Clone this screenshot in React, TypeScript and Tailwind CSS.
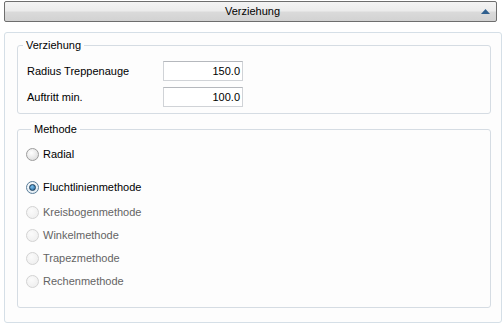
import React from 'react';

type RadioProps = { label: string; checked?: boolean; disabled?: boolean };

const Radio: React.FC<RadioProps> = ({ label, checked, disabled }) => {
    return (
        <div className="flex items-center h-[15px]">
            <span
                className={`flex items-center justify-center w-[13px] h-[13px] rounded-full border ${disabled
                    ? 'border-[#d3d3d3] bg-[radial-gradient(circle_at_40%_35%,#fbfbfb,#ececec)]'
                    : checked
                        ? 'border-[#5a7d99] bg-[radial-gradient(circle_at_40%_35%,#ffffff,#d8e6ef)]'
                        : 'border-[#9c9c9c] bg-[radial-gradient(circle_at_40%_35%,#ffffff,#d6d6d6)]'
                    }`}
            >
                {checked && (
                    <span className="w-[7px] h-[7px] rounded-full border border-[#193d5c] bg-[radial-gradient(circle_at_40%_35%,#7ec3f0,#1c5d92)]" />
                )}
            </span>
            <span className={`ml-[4px] leading-[13px] ${disabled ? 'text-[#646464]' : 'text-black'}`}>{label}</span>
        </div>
    );
};

const Field: React.FC<{ label: string; value: string }> = ({ label, value }) => (
    <div className="flex items-center h-[20px]">
        <span className="w-[145px] pl-[9px] text-black">{label}</span>
        <div className="w-[80px] h-[20px] border border-[#d0d3d7] border-t-[#b5b8bd] bg-white flex items-center justify-end pr-[2px] text-black">
            {value}
        </div>
    </div>
);

const App: React.FC = () => {
    return (
        <div className="w-[504px] h-[327px] bg-white pt-[1px] pl-[4px] text-[11px] font-['Liberation_Sans',Arial,sans-serif] overflow-hidden">
            {/* Section header */}
            <div className="w-[493px] h-[21px] rounded-[2px] border border-[#6e6e6e] bg-[linear-gradient(to_bottom,#f4f4f4_0%,#ececec_45%,#dadada_55%,#d2d2d2_100%)] flex items-center relative">
                <span className="flex-1 text-center text-[11px] text-black pl-[4px]">Verziehung</span>
                <svg width="9" height="5" viewBox="0 0 9 5" className="absolute right-[6px] top-[7px]">
                    <polygon points="0,5 9,5 4.5,0" fill="#2f5f8e" />
                </svg>
            </div>

            {/* Panel */}
            <div className="mt-[10px] w-[498px] h-[291px] rounded-[3px] border border-[#d5dfe7] bg-[#fdfdfd] px-[12px] pt-[6px]">
                <fieldset className="w-[474px] h-[75px] rounded-[3px] border border-[#d5dce3] pt-[9px]">
                    <legend className="ml-[5px] px-[3px] leading-[13px] text-black">Verziehung</legend>
                    <div className="flex flex-col gap-[6px]">
                        <Field label="Radius Treppenauge" value="150.0" />
                        <Field label="Auftritt min." value="100.0" />
                    </div>
                </fieldset>

                <fieldset className="mt-[9px] w-[474px] h-[185px] rounded-[3px] border border-[#d5dce3] pl-[8px] pt-[11px]">
                    <legend className="ml-[5px] px-[3px] leading-[13px] text-black">Methode</legend>
                    <div className="flex flex-col">
                        <Radio label="Radial" />
                        <div className="mt-[18px] flex flex-col">
                            <Radio label="Fluchtlinienmethode" checked />
                            <div className="mt-[10px] flex flex-col gap-[8px]">
                                <Radio label="Kreisbogenmethode" disabled />
                                <Radio label="Winkelmethode" disabled />
                                <Radio label="Trapezmethode" disabled />
                                <Radio label="Rechenmethode" disabled />
                            </div>
                        </div>
                    </div>
                </fieldset>
            </div>
        </div>
    );
};

export default App;
